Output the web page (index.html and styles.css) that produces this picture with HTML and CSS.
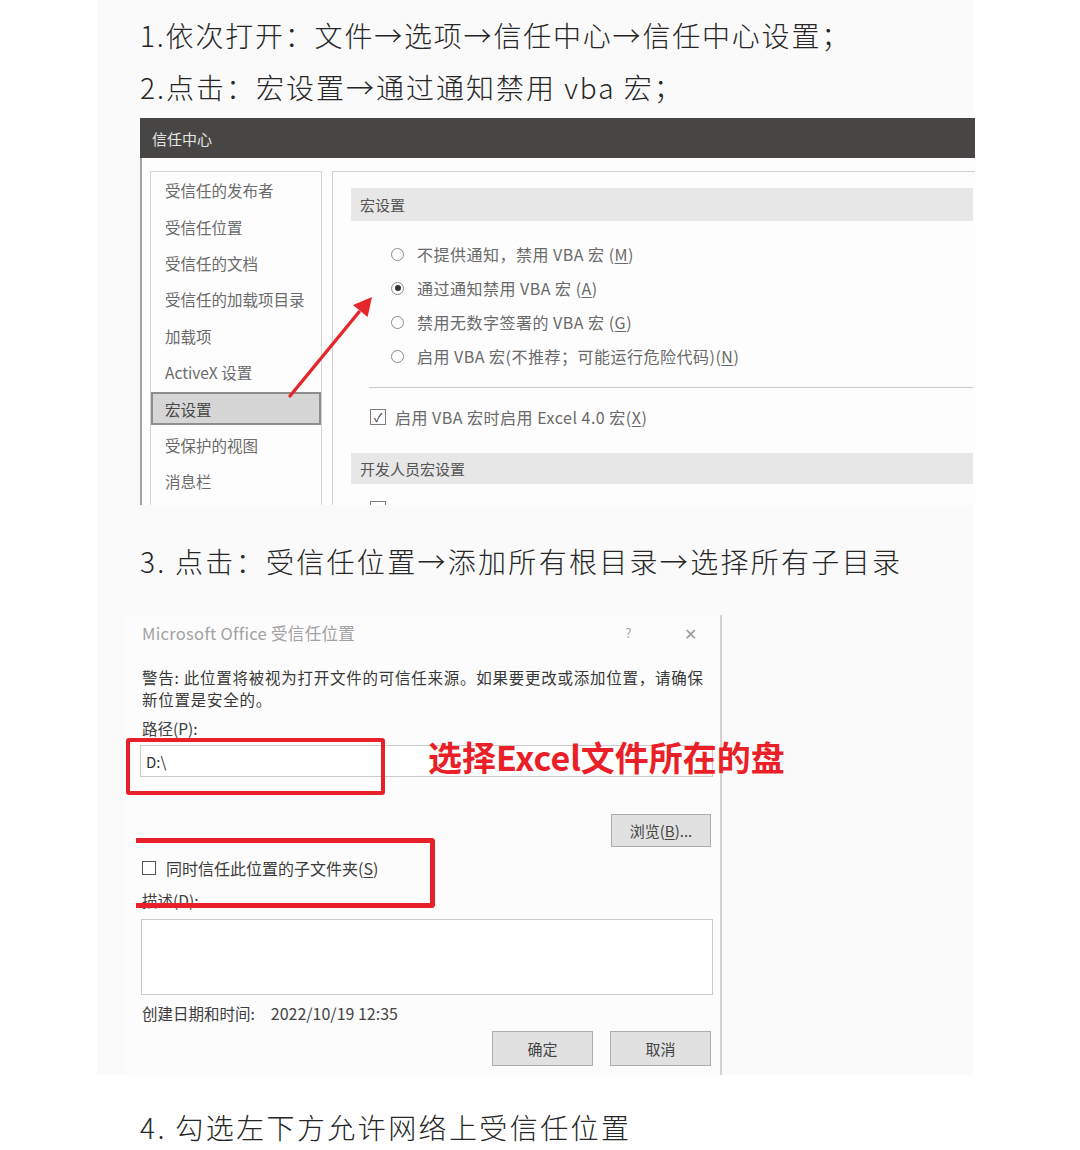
FILE: index.html
```html
<!DOCTYPE html>
<html lang="zh-CN">
<head>
<meta charset="utf-8">
<title>信任中心设置步骤</title>
<link rel="stylesheet" href="styles.css">
</head>
<body>
<div class="sheet">
  <p class="step step1">1.依次打开：文件→选项→信任中心→信任中心设置；</p>
  <p class="step step2">2.点击：宏设置→通过通知禁用 vba 宏；</p>

  <div class="tc">
    <div class="tc-title">信任中心</div>
    <div class="tc-body">
      <ul class="nav">
        <li>受信任的发布者</li>
        <li>受信任位置</li>
        <li>受信任的文档</li>
        <li>受信任的加载项目录</li>
        <li>加载项</li>
        <li>ActiveX 设置</li>
        <li class="sel">宏设置</li>
        <li>受保护的视图</li>
        <li>消息栏</li>
      </ul>
      <div class="main">
        <div class="sec-head">宏设置</div>
        <div class="radios">
          <div class="opt"><span class="radio"></span>不提供通知，禁用 VBA 宏 (<u>M</u>)</div>
          <div class="opt"><span class="radio on"></span>通过通知禁用 VBA 宏 (<u>A</u>)</div>
          <div class="opt"><span class="radio"></span>禁用无数字签署的 VBA 宏 (<u>G</u>)</div>
          <div class="opt"><span class="radio"></span>启用 VBA 宏(不推荐；可能运行危险代码)(<u>N</u>)</div>
        </div>
        <div class="sep"></div>
        <div class="chk-row"><span class="chk">✓</span>启用 VBA 宏时启用 Excel 4.0 宏(<u>X</u>)</div>
        <div class="sec-head sec-head2">开发人员宏设置</div>
        <div class="chk-row partial"><span class="chk"></span></div>
      </div>
      <svg class="arrow" viewBox="0 0 835 347" width="835" height="347" aria-hidden="true">
        <line x1="148" y1="238" x2="217" y2="154" stroke="#e5272d" stroke-width="3.4" stroke-linecap="round"/>
        <polygon points="230,139 225.6,159 211,147" fill="#e5272d"/>
      </svg>
    </div>
  </div>

  <p class="step step3">3. 点击：受信任位置→添加所有根目录→选择所有子目录</p>

  <div class="tl">
    <div class="tl-title">
      <span>Microsoft Office 受信任位置</span>
      <span class="q">?</span>
      <span class="x">✕</span>
    </div>
    <div class="warn">警告: 此位置将被视为打开文件的可信任来源。如果要更改或添加位置，请确保<br>新位置是安全的。</div>
    <div class="lbl">路径(P):</div>
    <div class="input">D:\
      <div class="redbox1"></div>
      <div class="redtext">选择Excel文件所在的盘</div>
    </div>
    <div class="browse-row"><span class="btn btn-browse">浏览(<u>B</u>)...</span></div>
    <div class="sub-row"><span class="box"></span>同时信任此位置的子文件夹(<u>S</u>)</div>
    <div class="lbl desc">描述(D):</div>
    <div class="textarea"></div>
    <div class="date-row"><span>创建日期和时间:</span><span class="date">2022/10/19 12:35</span></div>
    <div class="btn-row"><span class="btn">确定</span><span class="btn">取消</span></div>
    <div class="redbox2"></div>
  </div>
</div>
<p class="step step4">4. 勾选左下方允许网络上受信任位置</p>
</body>
</html>
```

FILE: styles.css
```css
html, body {
  margin: 0;
  padding: 0;
  background: #ffffff;
}

body {
  font-family: "Noto Sans CJK SC", "Noto Sans", sans-serif;
  color: #2a2a2a;
}

.sheet {
  margin-left: 97px;
  width: 876px;
  height: 1075px;
  box-sizing: border-box;
  padding: 9px 0 0 43px;
  background: #fafafa;
}

.step {
  margin: 0;
  font-size: 28px;
  line-height: 52px;
  letter-spacing: 1.8px;
  font-weight: 300;
  color: #262626;
  white-space: nowrap;
}

.step2 {
  letter-spacing: 2px;
}

.step3 {
  margin-top: 30px;
  letter-spacing: 2.3px;
}

.step4 {
  margin: 26px 0 0 140px;
  letter-spacing: 2.4px;
}

/* ---------- Trust center dialog ---------- */
.tc {
  margin-top: 5px;
  width: 835px;
}

.tc-title {
  height: 40px;
  background: #474644;
  color: #e4e4e4;
  font-size: 15px;
  display: flex;
  align-items: center;
  padding-left: 12px;
}

.tc-body {
  position: relative;
  height: 347px;
  overflow: hidden;
  box-sizing: border-box;
  border-left: 2px solid #a3a3a3;
  background: #fdfdfd;
  display: flex;
  gap: 10px;
  padding: 13px 0 0 8px;
}

.nav {
  list-style: none;
  margin: 0;
  padding: 0;
  width: 172px;
  flex: none;
  box-sizing: border-box;
  border: 1px solid #d4d4d4;
  border-bottom: none;
}

.nav li {
  height: 36.4px;
  display: flex;
  align-items: center;
  padding-left: 14px;
  font-size: 15.5px;
  color: #6b6b6b;
  white-space: nowrap;
}

.nav li.sel {
  height: 33px;
  margin: 1.7px 0;
  box-sizing: border-box;
  padding-left: 12px;
  background: #d6d6d6;
  border: 2px solid #8d8d8d;
  color: #474747;
}

.main {
  flex: 1;
  box-sizing: border-box;
  border-top: 1px solid #d0d0d0;
  border-left: 1px solid #d0d0d0;
  padding: 16px 2px 0 18px;
}

.sec-head {
  height: 33px;
  background: #e7e7e7;
  display: flex;
  align-items: center;
  padding-left: 9px;
  font-size: 15px;
  color: #555555;
}

.sec-head2 {
  margin-top: 19px;
  height: 31px;
}

.radios {
  margin-top: 16px;
  padding-left: 40px;
}

.opt {
  height: 34px;
  display: flex;
  align-items: center;
  font-size: 16px;
  letter-spacing: 0.5px;
  color: #6a6a6a;
  white-space: nowrap;
}

.opt u, .chk-row u, .sub-row u, .btn u {
  text-decoration-thickness: 1px;
  text-underline-offset: 2px;
}

.radio {
  width: 13px;
  height: 13px;
  box-sizing: border-box;
  border: 1px solid #8a8a8a;
  border-radius: 50%;
  margin-right: 13px;
  flex: none;
  display: flex;
  align-items: center;
  justify-content: center;
  background: #fff;
}

.radio.on::after {
  content: "";
  width: 6px;
  height: 6px;
  border-radius: 50%;
  background: #333;
}

.sep {
  margin: 14px 0 0 18px;
  height: 1px;
  background: #c9c9c9;
}

.chk-row {
  margin-top: 12px;
  height: 34px;
  display: flex;
  align-items: center;
  padding-left: 19px;
  font-size: 16px;
  letter-spacing: 0.5px;
  color: #6a6a6a;
  white-space: nowrap;
}

.chk {
  width: 16px;
  height: 16px;
  box-sizing: border-box;
  border: 1px solid #7d7d7d;
  margin-right: 9px;
  flex: none;
  font-size: 12px;
  line-height: 14px;
  letter-spacing: 0;
  text-align: center;
  color: #333;
  background: #fff;
}

.chk-row.partial {
  margin-top: 17px;
  height: 16px;
  align-items: flex-start;
}

.arrow {
  position: absolute;
  left: 0;
  top: 0;
  pointer-events: none;
}

/* ---------- Trusted location dialog ---------- */
.tl {
  position: relative;
  margin: 28px 0 0 -15px;
  width: 597px;
  height: 460px;
  box-sizing: border-box;
  border-right: 2px solid #d2d2d2;
  padding-left: 17px;
  background: #fcfcfc;
  font-size: 15.5px;
  color: #3a3a3a;
}

.tl-title {
  height: 35px;
  display: flex;
  align-items: center;
  color: #a2a2a2;
  font-size: 16.5px;
  letter-spacing: 0.3px;
  white-space: nowrap;
}

.tl-title .q {
  margin-left: auto;
  margin-right: 52px;
  font-size: 13px;
}

.tl-title .x {
  margin-right: 23px;
  font-size: 16px;
  color: #9a9a9a;
}

.warn {
  margin-top: 16px;
  line-height: 22px;
  letter-spacing: 0.75px;
  white-space: nowrap;
  color: #383838;
}

.lbl {
  margin-top: 7px;
  line-height: 22px;
  color: #404040;
}

.input {
  position: relative;
  margin: 6px 0 0 -2px;
  width: 573px;
  height: 32px;
  box-sizing: border-box;
  border: 1px solid #cacaca;
  background: #fff;
  display: flex;
  align-items: center;
  padding-left: 5px;
  font-size: 15px;
  color: #333;
}

.redbox1 {
  position: absolute;
  left: -15px;
  top: -8px;
  width: 259px;
  height: 57px;
  box-sizing: border-box;
  border: 4px solid #e8202a;
  border-radius: 3px;
}

.redtext {
  position: absolute;
  left: 287px;
  top: -9px;
  line-height: 40px;
  font-size: 34px;
  font-weight: 700;
  color: #ea1f28;
  white-space: nowrap;
}

.browse-row {
  margin-top: 37px;
  display: flex;
  justify-content: flex-end;
  padding-right: 9px;
}

.btn {
  width: 100px;
  height: 33px;
  box-sizing: border-box;
  border: 1px solid #adadad;
  background: #e1e1e1;
  display: flex;
  align-items: center;
  justify-content: center;
  font-size: 15px;
  color: #444;
}

.sub-row {
  margin-top: 11px;
  height: 20px;
  display: flex;
  align-items: center;
  white-space: nowrap;
  font-size: 16px;
  color: #3c3c3c;
}

.box {
  width: 14px;
  height: 14px;
  box-sizing: border-box;
  border: 1px solid #555;
  background: #fff;
  margin-right: 10px;
  flex: none;
}

.lbl.desc {
  margin-top: 12px;
  line-height: 20px;
}

.textarea {
  margin: 9px 0 0 -1px;
  width: 572px;
  height: 76px;
  box-sizing: border-box;
  border: 1px solid #cacaca;
  background: #fff;
}

.date-row {
  margin-top: 8px;
  line-height: 20px;
  display: flex;
  gap: 16px;
  color: #3c3c3c;
}

.date {
  font-size: 16px;
  color: #444;
}

.btn-row {
  margin-top: 8px;
  display: flex;
  justify-content: flex-end;
  gap: 17px;
  padding-right: 9px;
}

.btn-row .btn {
  width: 101px;
  height: 35px;
}

.redbox2 {
  position: absolute;
  left: 11px;
  top: 223px;
  width: 299px;
  height: 70px;
  box-sizing: border-box;
  border: 5px solid #e8202a;
  border-left: none;
  border-radius: 0 4px 4px 0;
}
```
